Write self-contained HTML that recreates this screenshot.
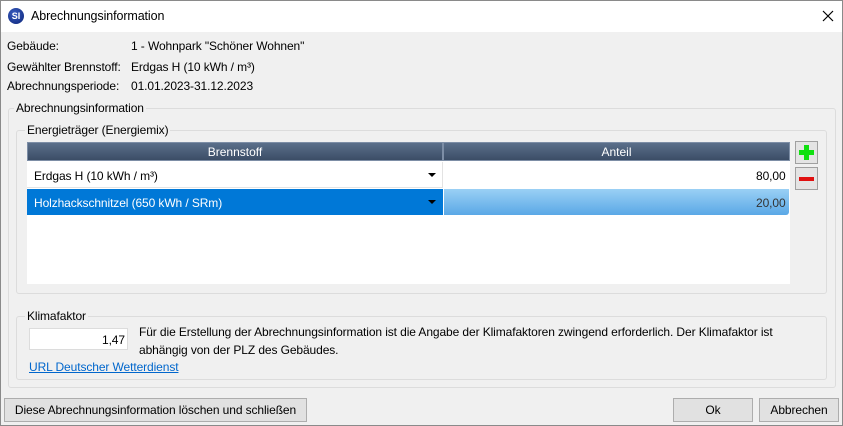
<!DOCTYPE html>
<html><head><style>
body{margin:0;width:843px;height:426px;overflow:hidden;font-family:"Liberation Sans",sans-serif;font-size:12px;color:#000;}
.win{position:absolute;left:0;top:0;width:841px;height:424px;border:1px solid #8a8a8a;background:#f0f0f0;}
.title{position:absolute;left:0;top:0;width:841px;height:31px;background:#fff;}
.a{position:absolute;white-space:nowrap;letter-spacing:-0.1px;}
.grp{position:absolute;border:1px solid #dcdcdc;border-radius:3px;}
.lg{position:absolute;background:#f0f0f0;padding:0 2px;white-space:nowrap;letter-spacing:-0.1px}
.btn{position:absolute;border:1px solid #adadad;background:#e1e1e1;text-align:center;line-height:22px;letter-spacing:-0.1px}
.hd{position:absolute;top:141px;height:19px;background:linear-gradient(#5b6f8a,#3b4d66);color:#fff;text-align:center;line-height:19px;border:1px solid #7d8ea6;box-sizing:border-box}
.arr{position:absolute;width:0;height:0;border-left:4px solid transparent;border-right:4px solid transparent;border-top:4px solid #000}
</style></head><body>
<div class="win">
<div class="title">
 <div style="position:absolute;left:7px;top:7px;width:16px;height:16px;border-radius:50%;background:radial-gradient(circle at 40% 35%,#3a5cc0,#0b2578);color:#fff;font-size:9px;font-weight:bold;text-align:center;line-height:16px">SI</div>
 <div class="a" style="left:30px;top:8px;font-size:12.5px">Abrechnungsinformation</div>
 <svg style="position:absolute;left:821px;top:9px" width="12" height="12"><path d="M1 1L11 11M11 1L1 11" stroke="#000" stroke-width="1.2"/></svg>
</div>
<div class="a" style="left:6px;top:38px">Gebäude:</div>
<div class="a" style="left:130px;top:38px">1 - Wohnpark "Schöner Wohnen"</div>
<div class="a" style="left:6px;top:59px">Gewählter Brennstoff:</div>
<div class="a" style="left:130px;top:59px">Erdgas H (10 kWh / m³)</div>
<div class="a" style="left:6px;top:78px">Abrechnungsperiode:</div>
<div class="a" style="left:130px;top:78px">01.01.2023-31.12.2023</div>

<div class="grp" style="left:7px;top:107px;width:826px;height:278px"></div>
<div class="lg" style="left:13px;top:100px">Abrechnungsinformation</div>
<div class="grp" style="left:15px;top:129px;width:809px;height:162px"></div>
<div class="lg" style="left:24px;top:122px">Energieträger (Energiemix)</div>

<div style="position:absolute;left:26px;top:141px;width:763px;height:142px;background:#fff"></div>
<div class="hd" style="left:26px;width:416px">Brennstoff</div>
<div class="hd" style="left:442px;width:347px">Anteil</div>
<div style="position:absolute;left:26px;top:161px;width:416px;height:26px;border-right:1px solid #e3e3e3;border-bottom:1px solid #e3e3e3;box-sizing:border-box"></div>
<div class="a" style="left:33px;top:168px">Erdgas H (10 kWh / m³)</div>
<div class="arr" style="left:427px;top:172px"></div>
<div class="a" style="left:755px;top:168px">80,00</div>
<div style="position:absolute;left:26px;top:188px;width:416px;height:26px;background:#0078d7"></div>
<div class="a" style="left:33px;top:195px;color:#fff">Holzhackschnitzel (650 kWh / SRm)</div>
<div class="arr" style="left:427px;top:199px"></div>
<div style="position:absolute;left:443px;top:188px;width:345px;height:26px;background:linear-gradient(#9ad0f5,#5aa8e6);border-radius:0 0 3px 0"></div>
<div class="a" style="left:755px;top:195px;color:#333">20,00</div>

<div style="position:absolute;left:794px;top:140px;width:21px;height:21px;border:1px solid #a0a0a0;background:#e4e4e4"><div style="position:absolute;left:3px;top:8px;width:15px;height:5px;background:#10e010"></div><div style="position:absolute;left:8px;top:3px;width:5px;height:15px;background:#10e010"></div></div>
<div style="position:absolute;left:794px;top:166px;width:21px;height:21px;border:1px solid #a0a0a0;background:#e4e4e4"><div style="position:absolute;left:3px;top:9px;width:15px;height:4px;background:#e01010"></div></div>

<div class="grp" style="left:15px;top:315px;width:809px;height:62px"></div>
<div class="lg" style="left:24px;top:308px">Klimafaktor</div>
<div style="position:absolute;left:28px;top:327px;width:99px;height:22px;background:#fff;border:1px solid #dcdcdc;box-sizing:border-box"></div>
<div class="a" style="left:101px;top:332px">1,47</div>
<div class="a" style="left:138px;top:324px">Für die Erstellung der Abrechnungsinformation ist die Angabe der Klimafaktoren zwingend erforderlich. Der Klimafaktor ist</div>
<div class="a" style="left:138px;top:342px">abhängig von der PLZ des Gebäudes.</div>
<div class="a" style="left:28px;top:359px;color:#0066cc;text-decoration:underline">URL Deutscher Wetterdienst</div>

<div class="btn" style="left:3px;top:397px;width:301px;height:22px">Diese Abrechnungsinformation löschen und schließen</div>
<div class="btn" style="left:672px;top:397px;width:78px;height:22px">Ok</div>
<div class="btn" style="left:758px;top:397px;width:78px;height:22px">Abbrechen</div>
</div>
</body></html>
